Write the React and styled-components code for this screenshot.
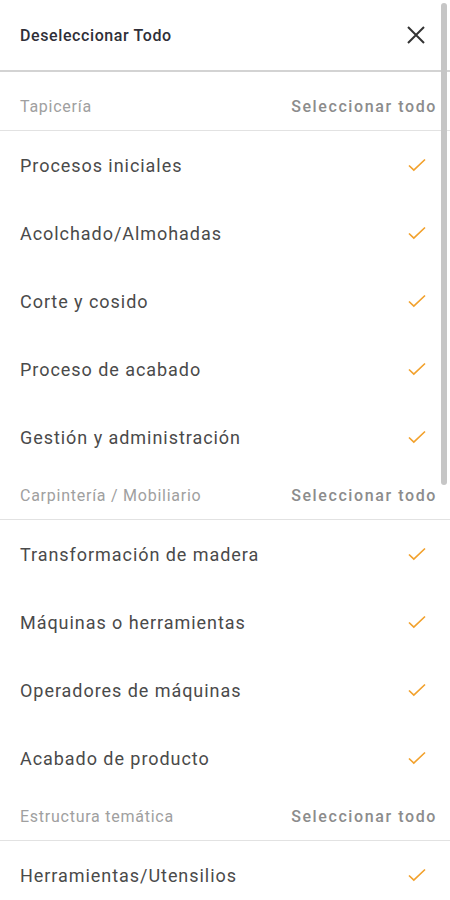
import React from "react";
import styled, { createGlobalStyle } from "styled-components";

const GlobalStyle = createGlobalStyle`
  html, body {
    margin: 0;
    padding: 0;
    background: #ffffff;
    font-family: Roboto, "Liberation Sans", sans-serif;
  }
`;

const Screen = styled.div`
  position: relative;
  width: 450px;
  height: 900px;
  overflow: hidden;
  background: #fff;
`;

const TopBar = styled.header`
  display: flex;
  justify-content: space-between;
  align-items: center;
  height: 70px;
  padding: 0 20px;
  border-bottom: 2px solid #d3d3d3;
`;

const TopTitle = styled.h1`
  margin: 0;
  font-size: 16px;
  font-weight: 500;
  color: #2f2f38;
  letter-spacing: 0.6px;
`;

const CloseButton = styled.button`
  display: flex;
  align-items: center;
  justify-content: center;
  padding: 0;
  margin-right: 4px;
  border: none;
  background: none;
  color: #333;
`;

const List = styled.div`
  padding-top: 10px;
`;

const SectionHeader = styled.div`
  display: flex;
  justify-content: space-between;
  align-items: center;
  height: 48px;
  padding: 0 13px 0 20px;
  border-bottom: 1px solid #e2e2e2;
`;

const SectionLabel = styled.span`
  font-size: 16px;
  letter-spacing: 0.75px;
  color: #a0a0a0;
`;

const SelectAll = styled.button`
  padding: 0;
  border: none;
  background: none;
  font-family: inherit;
  font-size: 16px;
  font-weight: 500;
  letter-spacing: 1.6px;
  color: #8c8c8c;
`;

const Row = styled.div`
  display: flex;
  justify-content: space-between;
  align-items: center;
  height: 68px;
  padding: 0 21px 0 20px;
`;

const RowLabel = styled.span`
  font-size: 18px;
  letter-spacing: 0.95px;
  color: #4a4a4a;
`;

const ScrollThumb = styled.div`
  position: absolute;
  top: 3px;
  right: 3px;
  width: 6px;
  height: 482px;
  border-radius: 3px;
  background: #c6c6c6;
`;

const CloseIcon = () => (
  <svg width="20" height="20" viewBox="0 0 20 20">
    <path d="M2 2 L18 18 M18 2 L2 18" stroke="currentColor" strokeWidth="2" fill="none" />
  </svg>
);

const CheckIcon = () => (
  <svg width="24" height="24" viewBox="0 0 24 24">
    <path d="M4 12.5 L8.8 17 L20 6.5" stroke="#f2a12c" strokeWidth="1.7" fill="none" />
  </svg>
);

const sections = [
  {
    title: "Tapicería",
    items: [
      "Procesos iniciales",
      "Acolchado/Almohadas",
      "Corte y cosido",
      "Proceso de acabado",
      "Gestión y administración",
    ],
  },
  {
    title: "Carpintería / Mobiliario",
    items: [
      "Transformación de madera",
      "Máquinas o herramientas",
      "Operadores de máquinas",
      "Acabado de producto",
    ],
  },
  {
    title: "Estructura temática",
    items: ["Herramientas/Utensilios"],
  },
];

export default function App() {
  return (
    <Screen>
      <GlobalStyle />
      <TopBar>
        <TopTitle>Deseleccionar Todo</TopTitle>
        <CloseButton aria-label="Cerrar">
          <CloseIcon />
        </CloseButton>
      </TopBar>
      <List>
        {sections.map((s) => (
          <section key={s.title}>
            <SectionHeader>
              <SectionLabel>{s.title}</SectionLabel>
              <SelectAll>Seleccionar todo</SelectAll>
            </SectionHeader>
            {s.items.map((item) => (
              <Row key={item}>
                <RowLabel>{item}</RowLabel>
                <CheckIcon />
              </Row>
            ))}
          </section>
        ))}
      </List>
      <ScrollThumb />
    </Screen>
  );
}
